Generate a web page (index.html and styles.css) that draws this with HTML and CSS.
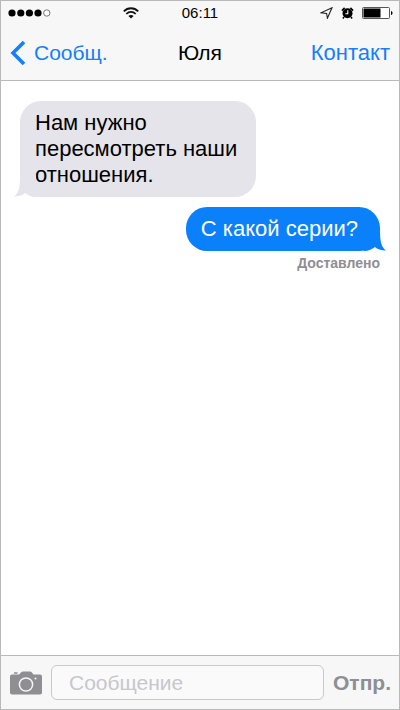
FILE: index.html
```html
<!DOCTYPE html>
<html lang="ru">
<head>
  <meta charset="UTF-8">
  <meta name="viewport" content="width=device-width, initial-scale=1.0">
  <title>Сообщения</title>
  <link rel="stylesheet" href="styles.css">
</head>
<body>
  <div class="phone">
    <header class="top">
      <div class="status">
        <div class="status-left">
          <svg class="signal" width="44" height="10" viewBox="0 0 44 10">
            <circle cx="5" cy="5" r="3.6"/>
            <circle cx="13.8" cy="5" r="3.6"/>
            <circle cx="22.4" cy="5" r="3.6"/>
            <circle cx="31" cy="5" r="3.6"/>
            <circle cx="39.8" cy="5" r="3.2" fill="#fff" stroke="#555" stroke-width="0.8"/>
          </svg>
          <svg class="wifi" width="16" height="12" viewBox="0 0 16 12" fill="none" stroke="#111" stroke-width="1.8">
            <path d="M0.8 4.4C4.8 0.2 11.2 0.2 15.2 4.4"/>
            <path d="M3.3 7C6 4.2 10 4.2 12.7 7"/>
            <path d="M8 11.6L5.4 8.9C6.9 7.6 9.1 7.6 10.6 8.9Z" fill="#111" stroke="none"/>
          </svg>
        </div>
        <time class="clock">06:11</time>
        <div class="status-right">
          <svg width="13" height="12" viewBox="0 0 13 12" fill="none" stroke="#222" stroke-width="1.1">
            <path d="M12 0.8L1 5.8L6.6 6.4L7.4 11.2Z"/>
          </svg>
          <svg width="13" height="12" viewBox="0 0 13 12">
            <circle cx="6.5" cy="6.3" r="5"/>
            <path d="M0.9 3.6L3.6 0.9M12.1 3.6L9.4 0.9M3 10L1.9 11.5M10 10L11.1 11.5" stroke="#000" stroke-width="1.5"/>
            <path d="M6.8 3.2V6.7H4.4" fill="none" stroke="#fff" stroke-width="1.1"/>
          </svg>
          <svg width="31" height="12" viewBox="0 0 31 12">
            <rect x="0.5" y="0.5" width="27" height="11" rx="1" fill="#fff" stroke="#555"/>
            <rect x="1.5" y="1.5" width="17" height="9"/>
            <path d="M29 4C31 4.5 31 7.5 29 8Z"/>
          </svg>
        </div>
      </div>
      <nav class="nav">
        <a class="back" href="#">
          <svg width="16" height="26" viewBox="0 0 16 26" fill="none" stroke="#157efb" stroke-width="3.6">
            <path d="M14 2L3 13L14 24"/>
          </svg>
          Сообщ.
        </a>
        <h1 class="title">Юля</h1>
        <a class="contact" href="#">Контакт</a>
      </nav>
    </header>

    <main class="chat">
      <div class="bubble incoming">
        Нам нужно пересмотреть наши отношения.
        <svg class="tail" width="22" height="22" viewBox="0 0 22 22">
          <path d="M6 0C6 12 5 18 0 21.500C5 21.500 9 20 11 18C14 20 17 22 22 22V0Z"/>
        </svg>
      </div>
      <div class="bubble outgoing">
        С какой серии?
        <svg class="tail" width="22" height="22" viewBox="0 0 22 22">
          <path d="M16 0C16 12 17 18 22 21.500C17 21.500 13 20 11 18C8 20 5 22 0 22V0Z"/>
        </svg>
      </div>
      <p class="delivered">Доставлено</p>
    </main>

    <form class="composer">
      <button class="camera" type="button" aria-label="Камера">
        <svg width="32" height="24" viewBox="0 0 32 24">
          <path d="M2 3.5H9L11.500 1Q12 0.5 13 0.5H20Q21 0.5 21.500 1L23.500 3.5H30Q32 3.5 32 5.5V21.500Q32 23.500 30 23.500H2Q0 23.500 0 21.500V5.5Q0 3.5 2 3.5Z" fill="#8e8e93"/>
          <path d="M4 2H7.500" stroke="#8e8e93" stroke-width="1.5"/>
          <circle cx="16" cy="13.500" r="6.600" fill="none" stroke="#f7f7f7" stroke-width="1.500"/>
          <circle cx="25.500" cy="7.500" r="1" fill="#f7f7f7"/>
        </svg>
      </button>
      <input class="message" type="text" placeholder="Сообщение" aria-label="Сообщение">
      <button class="send" type="submit">Отпр.</button>
    </form>
  </div>
</body>
</html>
```

FILE: styles.css
```css
:root {
  --blue: #157efb;
  --bubble-blue: #0b80fb;
  --bubble-gray: #e5e4ea;
  --bar: #f7f7f7;
  --line: #b9b9b9;
}
* { box-sizing: border-box; margin: 0; padding: 0; }
body {
  font-family: "Liberation Sans", Arial, sans-serif;
  background: #fff;
  color: #000;
}
.phone {
  display: flex;
  flex-direction: column;
  min-height: 100vh;
  border: 1px solid var(--line);
}
.top {
  background: var(--bar);
  border-bottom: 1px solid var(--line);
}
.status {
  display: grid;
  grid-template-columns: 1fr auto 1fr;
  align-items: center;
  height: 24px;
  padding: 0 6px;
}
.status-left {
  display: flex;
  align-items: center;
  gap: 72px;
}
.clock { font-size: 15px; line-height: 24px; }
.status-right {
  display: flex;
  align-items: center;
  justify-content: flex-end;
  gap: 8px;
}
.nav {
  display: grid;
  grid-template-columns: 1fr auto 1fr;
  align-items: center;
  height: 55px;
  padding: 0 9px;
  font-size: 21px;
}
.nav a { color: var(--blue); text-decoration: none; }
.back {
  display: flex;
  align-items: center;
  gap: 8px;
}
.title { font-size: 21px; font-weight: 400; }
.contact { font-size: 22px; text-align: right; }
.chat {
  flex: 1;
  display: flex;
  flex-direction: column;
  padding: 20px 19px;
}
.bubble {
  position: relative;
  max-width: 236px;
  padding: 9px 15px;
  border-radius: 21px;
  font-size: 22px;
  line-height: 26px;
}
.incoming {
  align-self: flex-start;
  background: var(--bubble-gray);
}
.outgoing {
  align-self: flex-end;
  margin-top: 10px;
  padding-right: 22px;
  background: var(--bubble-blue);
  color: #fff;
}
.tail { position: absolute; bottom: 0; }
.incoming .tail { left: -6px; fill: var(--bubble-gray); }
.outgoing .tail { right: -6px; fill: var(--bubble-blue); }
.delivered {
  align-self: flex-end;
  margin-top: 4px;
  font-size: 14px;
  font-weight: 700;
  line-height: 16px;
  color: #8e8e93;
}
.composer {
  display: flex;
  align-items: center;
  gap: 9px;
  padding: 9px 8px 9px 9px;
  background: var(--bar);
  border-top: 1px solid var(--line);
}
.composer button {
  background: none;
  border: none;
  font-family: inherit;
  cursor: pointer;
}
.camera { display: flex; }
.message {
  flex: 1;
  min-width: 0;
  height: 35px;
  padding: 0 17px;
  background: #fafafa;
  border: 1px solid #c8c8cd;
  border-radius: 6px;
  font-family: inherit;
  font-size: 21px;
}
.message::placeholder { color: #c7c7cc; opacity: 1; }
.send {
  font-size: 21px;
  font-weight: 700;
  color: #8e8e93;
}
```
